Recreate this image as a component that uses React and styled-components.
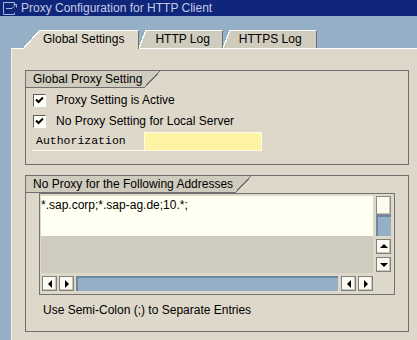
import styled, { createGlobalStyle } from "styled-components";

const SANS = `"Liberation Sans", Arial, sans-serif`;
const BEIGE = "#ddd8c9";
const FILL = "#cfcbbd";
const LINE = "#6e6e6e";
const BLUE = "#94afc6";

const GlobalStyle = createGlobalStyle`
  html, body {
    margin: 0;
    background: ${BLUE};
  }
  #root {
    width: 417px;
    height: 340px;
  }
`;

const Window = styled.div`
  width: 417px;
  height: 340px;
  display: flex;
  flex-direction: column;
  background: ${BLUE};
  overflow: hidden;
  font-family: ${SANS};
  font-size: 12px;
  color: #000;
`;

const TitleBar = styled.div`
  height: 16px;
  display: flex;
  align-items: center;
  gap: 3px;
  padding-left: 3px;
  background: #10267a;
  color: #c3cbe4;
  line-height: 16px;
`;

const TabStrip = styled.div`
  display: flex;
  align-items: flex-start;
  height: 18px;
  margin-top: 14px;
  padding-left: 23px;
  position: relative;
  z-index: 1;
`;

const Tab = styled.div`
  display: flex;
  height: ${(p) => (p.$active ? "19px" : "18px")};
`;

const TabCorner = styled.div`
  width: ${(p) => (p.$active ? "17px" : "7px")};
  background: linear-gradient(
    to bottom right,
    transparent calc(50% - 0.6px),
    #fff calc(50% - 0.6px),
    #fff calc(50% + 0.6px),
    ${(p) => (p.$active ? BEIGE : FILL)} calc(50% + 0.6px)
  );
`;

const TabLabel = styled.div`
  background: ${(p) => (p.$active ? BEIGE : FILL)};
  border-top: 1px solid #fff;
  border-right: 1px solid ${LINE};
  padding: ${(p) => p.$pad};
  line-height: 17px;
  white-space: nowrap;
`;

const Panel = styled.div`
  flex: 1;
  margin-left: 11px;
  background: ${BEIGE};
  border-top: 1px solid #fff;
  border-left: 1px solid #f3f1ea;
  padding: 21px 8px 0 13px;
  display: flex;
  flex-direction: column;
  gap: 10px;
`;

const Group = styled.div`
  border: 1px solid ${LINE};
  display: flex;
  flex-direction: column;
`;

const GroupHeader = styled.div`
  display: flex;
  height: 17px;
`;

const HeaderLabel = styled.div`
  background: ${FILL};
  border-bottom: 1px solid ${LINE};
  padding: 0 2px 0 7px;
  line-height: 16px;
  white-space: nowrap;
`;

const HeaderCorner = styled.div`
  width: 16px;
  background: linear-gradient(
    to bottom right,
    ${FILL} calc(50% - 0.6px),
    ${LINE} calc(50% - 0.6px),
    ${LINE} calc(50% + 0.6px),
    transparent calc(50% + 0.6px)
  );
`;

const SettingsBody = styled.div`
  display: flex;
  flex-direction: column;
  gap: 1px;
  padding: 2px 0 13px 7px;
`;

const CheckRow = styled.div`
  height: 20px;
  display: flex;
  align-items: center;
  gap: 10px;
`;

const CheckBox = styled.span`
  width: 13px;
  height: 13px;
  box-sizing: border-box;
  border: 1px solid;
  border-color: #5c5c5c #fff #fff #5c5c5c;
  background: #fffff6;
  display: flex;
  align-items: center;
  justify-content: center;
`;

const FieldRow = styled.div`
  display: flex;
  height: 19px;
  margin-left: -1px;
`;

const FieldLabel = styled.div`
  width: 112px;
  box-sizing: border-box;
  padding-left: 4px;
  border-bottom: 1px solid #f5f3ec;
  font-family: "Liberation Mono", "Courier New", monospace;
  font-size: 11.5px;
  line-height: 18px;
`;

const FieldInput = styled.div`
  width: 118px;
  box-sizing: border-box;
  border: 1px solid #fffbe4;
  background: #fff4a4;
`;

const ListBody = styled.div`
  display: flex;
  flex-direction: column;
  padding: 0 13px 13px 13px;
`;

const TableFrame = styled.div`
  height: 102px;
  box-sizing: border-box;
  border: 1px solid #727272;
  padding: 2px 3px 3px 1px;
  display: grid;
  grid-template-columns: 332px 15px;
  grid-template-rows: 77px 15px;
  gap: 3px;
`;

const Content = styled.div`
  display: flex;
  flex-direction: column;
`;

const TextArea = styled.div`
  height: 40px;
  box-sizing: border-box;
  padding-top: 1px;
  background: #fffff2;
  line-height: 16px;
`;

const EmptyArea = styled.div`
  flex: 1;
  background: #cfcbbe;
`;

const VScroll = styled.div`
  display: flex;
  flex-direction: column;
`;

const Thumb = styled.div`
  height: 19px;
  box-sizing: border-box;
  border: 1px solid #8a8a8a;
  box-shadow: inset -1px -1px 0 #c9c5b8;
  background: #fbfbf2;
`;

const Track = styled.div`
  flex: ${(p) => (p.$grow ? 1 : "none")};
  height: ${(p) => (p.$grow ? "auto" : "21px")};
  background: ${BLUE};
  box-shadow: inset 2px 2px 0 #6d889e;
  margin-bottom: ${(p) => (p.$grow ? "0" : "3px")};
`;

const HScroll = styled.div`
  display: flex;
  gap: 2px;
  padding-left: 1px;
`;

const ScrollButton = styled.div`
  width: 15px;
  height: 15px;
  box-sizing: border-box;
  border: 1px solid #808080;
  box-shadow: inset -1px -1px 0 #c9c5b8;
  background: #fafaf2;
  margin: ${(p) => p.$margin || "0"};
  display: flex;
  align-items: center;
  justify-content: center;

  &::after {
    content: "";
    width: 0;
    height: 0;
    border: 4px solid transparent;
    ${(p) =>
      p.$dir === "up"
        ? "border-bottom: 4px solid #000; border-top-width: 0; margin-top: -1px;"
        : p.$dir === "down"
        ? "border-top: 4px solid #000; border-bottom-width: 0;"
        : p.$dir === "left"
        ? "border-right: 4px solid #000; border-left-width: 0;"
        : "border-left: 4px solid #000; border-right-width: 0;"}
  }
`;

const Hint = styled.div`
  margin-top: 7px;
  padding-left: 4px;
  line-height: 16px;
`;

function TitleIcon() {
  return (
    <svg width="15" height="13" viewBox="0 0 15 13">
      <path
        d="M11.5 2.5 V0.5 H0.5 V12.5 H11.5 V10.5 M3 6.5 H9 L13 2.5 M10.5 2.5 H13.5 V5.5"
        fill="none"
        stroke="#aab5d6"
        strokeWidth="1"
      />
    </svg>
  );
}

function Check() {
  return (
    <svg width="9" height="8" viewBox="0 0 9 8">
      <path d="M1 3.5 L3.5 6 L8 1.5" fill="none" stroke="#000" strokeWidth="2" />
    </svg>
  );
}

const tabs = [
  { label: "Global Settings", active: true, pad: "0 14px 0 3px" },
  { label: "HTTP Log", active: false, pad: "0 12px 0 9px" },
  { label: "HTTPS Log", active: false, pad: "0 14px 0 9px" },
];

export default function App() {
  return (
    <Window>
      <GlobalStyle />
      <TitleBar>
        <TitleIcon />
        <span>Proxy Configuration for HTTP Client</span>
      </TitleBar>

      <TabStrip>
        {tabs.map((t) => (
          <Tab key={t.label} $active={t.active}>
            <TabCorner $active={t.active} />
            <TabLabel $active={t.active} $pad={t.pad}>
              {t.label}
            </TabLabel>
          </Tab>
        ))}
      </TabStrip>

      <Panel>
        <Group>
          <GroupHeader>
            <HeaderLabel>Global Proxy Setting</HeaderLabel>
            <HeaderCorner />
          </GroupHeader>
          <SettingsBody>
            <CheckRow>
              <CheckBox>
                <Check />
              </CheckBox>
              <span>Proxy Setting is Active</span>
            </CheckRow>
            <CheckRow>
              <CheckBox>
                <Check />
              </CheckBox>
              <span>No Proxy Setting for Local Server</span>
            </CheckRow>
            <FieldRow>
              <FieldLabel>Authorization</FieldLabel>
              <FieldInput />
            </FieldRow>
          </SettingsBody>
        </Group>

        <Group>
          <GroupHeader>
            <HeaderLabel>No Proxy for the Following Addresses</HeaderLabel>
            <HeaderCorner />
          </GroupHeader>
          <ListBody>
            <TableFrame>
              <Content>
                <TextArea>*.sap.corp;*.sap-ag.de;10.*;</TextArea>
                <EmptyArea />
              </Content>
              <VScroll>
                <Thumb />
                <Track />
                <ScrollButton $dir="up" $margin="0 0 3px 0" />
                <ScrollButton $dir="down" />
              </VScroll>
              <HScroll>
                <ScrollButton $dir="left" />
                <ScrollButton $dir="right" />
                <Track $grow />
                <ScrollButton $dir="left" $margin="0 0 0 1px" />
                <ScrollButton $dir="right" />
              </HScroll>
            </TableFrame>
            <Hint>Use Semi-Colon (;) to Separate Entries</Hint>
          </ListBody>
        </Group>
      </Panel>
    </Window>
  );
}
